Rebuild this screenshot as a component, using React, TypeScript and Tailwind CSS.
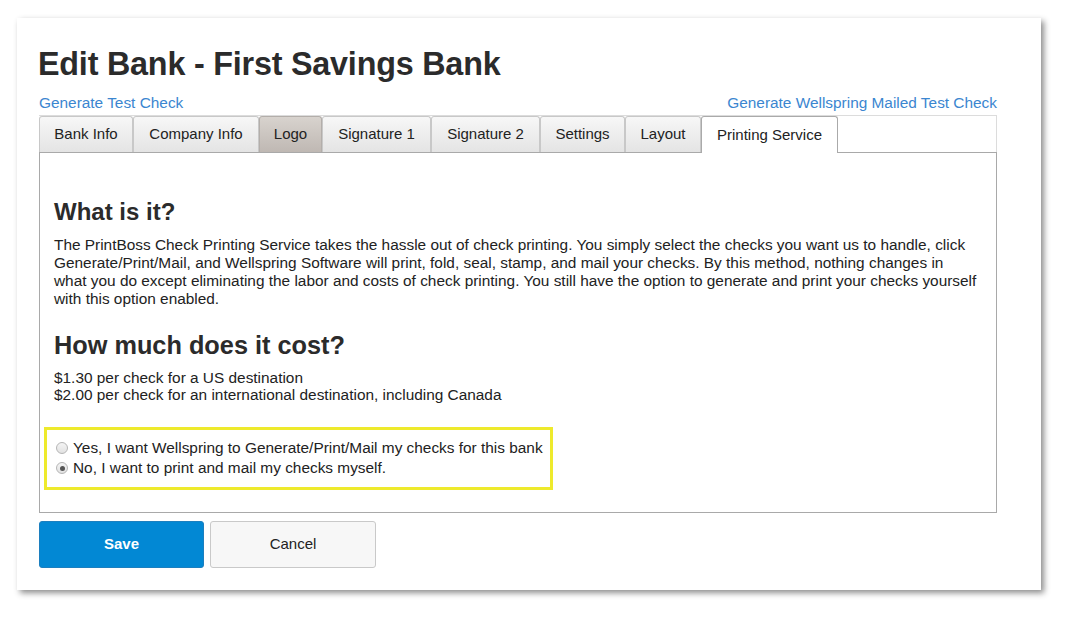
const tabs = [
  { label: "Bank Info", w: "w-[94px]" },
  { label: "Company Info", w: "w-[126px]" },
  { label: "Logo", w: "w-[63px]", state: "hover" },
  { label: "Signature 1", w: "w-[109px]" },
  { label: "Signature 2", w: "w-[109px]" },
  { label: "Settings", w: "w-[85px]" },
  { label: "Layout", w: "w-[76px]" },
  { label: "Printing Service", w: "w-[137px]", state: "active" },
];

const Radio = ({ checked }: { checked?: boolean }) => (
  <span className="w-[12px] h-[12px] rounded-full border border-[#b5b5b5] bg-gradient-to-b from-[#f4f4f4] to-[#e2e2e2] flex items-center justify-center shrink-0">
    {checked && <span className="w-[5px] h-[5px] rounded-full bg-[#555]" />}
  </span>
);

export default function App() {
  return (
    <div className="w-[1071px] h-[617px] bg-white pt-[18px] pl-[17px] font-['Liberation_Sans',Arial,sans-serif] text-[#222]">
      <div className="w-[1024px] h-[572px] bg-white shadow-[3px_3px_6px_rgba(0,0,0,0.45)] pl-[22px] pt-[26px]">
        <h1 className="text-[32.3px] leading-[40px] font-bold text-[#2b2b2b] ml-[-1px] tracking-[-0.2px]">
          Edit Bank - First Savings Bank
        </h1>
        <div className="w-[958px] flex justify-between text-[15.4px] leading-[18px] text-[#3b86d0] mt-[10px] mb-[3px]">
          <a>Generate Test Check</a>
          <a>Generate Wellspring Mailed Test Check</a>
        </div>
        <div className="w-[958px] flex h-[37px] border-t border-r border-[#dcdcdc]">
          {tabs.map((t) => (
            <div
              key={t.label}
              className={`${t.w} flex items-center justify-center text-[15px] border border-b-0 rounded-t-[3px] ${
                t.state === "active"
                  ? "bg-white border-[#aaa] text-[#222] h-[37px] relative z-10"
                  : t.state === "hover"
                  ? "bg-gradient-to-b from-[#d8d3ce] to-[#bfb8b3] border-[#b3aeaa] text-[#222]"
                  : "bg-gradient-to-b from-[#f7f7f7] to-[#e4e4e4] border-[#c8c8c8] text-[#222]"
              }`}
            >
              {t.label}
            </div>
          ))}
        </div>
        <div className="w-[958px] h-[361px] border border-[#a9a9a9] pl-[14px] pr-[14px] pt-[44px]">
          <h2 className="text-[24px] leading-[30px] font-bold text-[#2b2b2b]">What is it?</h2>
          <p className="w-[926px] text-[15.4px] leading-[18px] mt-[9px]">
            The PrintBoss Check Printing Service takes the hassle out of check printing. You simply select the checks you want us to handle, click Generate/Print/Mail, and Wellspring Software will print, fold, seal, stamp, and mail your checks. By this method, nothing changes in what you do except eliminating the labor and costs of check printing. You still have the option to generate and print your checks yourself with this option enabled.
          </p>
          <h2 className="text-[25.3px] leading-[30px] font-bold text-[#2b2b2b] mt-[22px]">How much does it cost?</h2>
          <div className="text-[15.4px] leading-[17px] mt-[9px]">
            <div>$1.30 per check for a US destination</div>
            <div>$2.00 per check for an international destination, including Canada</div>
          </div>
          <div className="ml-[-10px] mt-[24px] w-[509px] h-[63px] border-[3px] border-[#eeea2c] pl-[9px] pt-[8px] text-[15.4px] leading-[20px]">
            <label className="flex items-center gap-[5px]">
              <Radio />
              <span>Yes, I want Wellspring to Generate/Print/Mail my checks for this bank</span>
            </label>
            <label className="flex items-center gap-[5px]">
              <Radio checked />
              <span>No, I want to print and mail my checks myself.</span>
            </label>
          </div>
        </div>
        <div className="flex gap-[6px] mt-[8px]">
          <button className="w-[165px] h-[47px] bg-[#0288d4] text-white text-[15px] font-bold rounded-[3px] border border-[#1c7fbf]">
            Save
          </button>
          <button className="w-[166px] h-[47px] bg-[#f7f7f7] text-[#222] text-[15px] rounded-[3px] border border-[#c9c9c9]">
            Cancel
          </button>
        </div>
      </div>
    </div>
  );
}
